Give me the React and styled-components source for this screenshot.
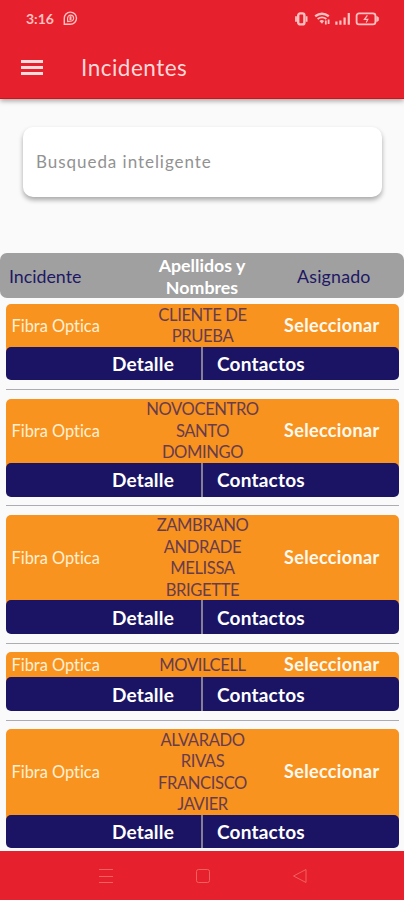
import styled, { createGlobalStyle } from "styled-components";

const INCIDENTS = [
  { id: 1, type: "Fibra Optica", client: "CLIENTE DE PRUEBA" },
  { id: 2, type: "Fibra Optica", client: "NOVOCENTRO SANTO DOMINGO" },
  { id: 3, type: "Fibra Optica", client: "ZAMBRANO ANDRADE MELISSA BRIGETTE" },
  { id: 4, type: "Fibra Optica", client: "MOVILCELL" },
  { id: 5, type: "Fibra Optica", client: "ALVARADO RIVAS FRANCISCO JAVIER" },
];

function ChatIcon() {
  return (
    <svg width="15" height="15" viewBox="0 0 15 15" fill="none" stroke="currentColor">
      <path d="M1.3 13.3V7.4A6.1 6.1 0 1 1 7.4 13.3Z" strokeWidth="1.4" />
      <path d="M4.6 10.6V7.2a3 3 0 1 1 3 3Z" strokeWidth="1.2" />
      <path d="M7.5 5.2v3.8" strokeWidth="2" />
    </svg>
  );
}

function StatusIcons() {
  return (
    <svg width="88" height="14" viewBox="0 0 88 14" fill="none" stroke="currentColor">
      <rect x="4.2" y="1.4" width="6.2" height="11" rx="2" strokeWidth="2.4" />
      <path d="M2 4.2v5.6M12.6 4.2v5.6" strokeWidth="1.8" />
      <path d="M21.2 4.2Q28 -0.6 34.8 4.2" strokeWidth="2.4" />
      <path d="M23.6 7Q28 3.8 32.4 7" strokeWidth="1.9" />
      <path d="M25.4 9Q28 7 30 9L28 11.8Z" fill="currentColor" stroke="none" />
      <path d="M31.8 12.6V8.4M34.6 7.4V12" strokeWidth="1.8" />
      <path d="M42.4 12.8V9.4M46.4 12.8V8.4M50.6 12.8V5.4M54.8 12.8V1" strokeWidth="2.2" />
      <rect x="62.6" y="1.4" width="18.8" height="11" rx="2.4" strokeWidth="1.8" />
      <path d="M82.6 4.2l2 1.4v2.8l-2 1.4z" fill="currentColor" strokeWidth="0.6" />
      <path d="M73.4 3.4l-3 4h3.4l-1.6 3.2" strokeWidth="1.2" />
    </svg>
  );
}

function IncidentCard({ type, client }) {
  return (
    <Card>
      <Summary>
        <IncidentType>{type}</IncidentType>
        <ClientName>{client}</ClientName>
        <SelectButton>Seleccionar</SelectButton>
      </Summary>
      <Actions>
        <ActionButton $align="right">Detalle</ActionButton>
        <ActionButton $align="left">Contactos</ActionButton>
      </Actions>
    </Card>
  );
}

export default function App() {
  return (
    <Screen>
      <GlobalStyle />
      <TopBar>
        <StatusBar>
          <Clock>3:16</Clock>
          <ChatIcon />
          <StatusRight>
            <StatusIcons />
          </StatusRight>
        </StatusBar>
        <Toolbar>
          <MenuButton aria-label="Menu">
            <span />
            <span />
            <span />
          </MenuButton>
          <Title>Incidentes</Title>
        </Toolbar>
      </TopBar>

      <Content>
        <SearchBox type="text" placeholder="Busqueda inteligente" />

        <TableHeader>
          <HeaderCell>Incidente</HeaderCell>
          <HeaderCell $strong>Apellidos y Nombres</HeaderCell>
          <HeaderCell $last>Asignado</HeaderCell>
        </TableHeader>

        <List>
          {INCIDENTS.map((incident) => (
            <IncidentCard key={incident.id} type={incident.type} client={incident.client} />
          ))}
        </List>
      </Content>

      <NavBar>
        <svg width="16" height="16" viewBox="0 0 16 16" fill="none" stroke="currentColor">
          <path d="M1 1.5h14M1 8.5h14M1 14.5h14" />
        </svg>
        <svg width="16" height="16" viewBox="0 0 16 16" fill="none" stroke="currentColor">
          <rect x="1.5" y="1.5" width="13" height="13" rx="2" />
        </svg>
        <svg width="16" height="16" viewBox="0 0 16 16" fill="none" stroke="currentColor">
          <path d="M14 1.5v13L1.5 8z" strokeLinejoin="round" />
        </svg>
      </NavBar>
    </Screen>
  );
}

const GlobalStyle = createGlobalStyle`
  * {
    box-sizing: border-box;
  }

  body {
    margin: 0;
    background: #fafafa;
    font-family: Lato, "Open Sans", sans-serif;
    font-variant-ligatures: none;
  }

  button {
    padding: 0;
    border: 0;
    background: none;
    color: inherit;
    font-family: inherit;
  }
`;

const Screen = styled.div`
  width: 404px;
  height: 900px;
  display: flex;
  flex-direction: column;
  overflow: hidden;
  background: #fafafa;
`;

const TopBar = styled.header`
  flex: none;
  height: 99px;
  border-bottom: 1px solid #d3121a;
  background: #e6202c;
  color: #ffd9d9;
  box-shadow: 0 2px 5px rgba(0, 0, 0, 0.35);
`;

const StatusBar = styled.div`
  height: 37px;
  display: flex;
  align-items: center;
  padding: 0 22px 0 26px;
  color: #ffc0c0;
`;

const Clock = styled.span`
  width: 37px;
  font-size: 14px;
  font-weight: 700;
`;

const StatusRight = styled.div`
  display: flex;
  margin-left: auto;
`;

const Toolbar = styled.div`
  height: 61px;
  display: flex;
  align-items: center;
  padding-left: 21px;
`;

const MenuButton = styled.button`
  width: 22px;
  display: flex;
  flex-direction: column;
  gap: 3px;

  span {
    height: 3px;
    background: #ffdcdc;
  }
`;

const Title = styled.h1`
  margin: 0 0 0 38px;
  font-size: 22.5px;
  font-weight: 400;
  letter-spacing: 0.5px;
`;

const Content = styled.main`
  flex: 1;
  min-height: 0;
  display: flex;
  flex-direction: column;
`;

const SearchBox = styled.input`
  flex: none;
  height: 70px;
  margin: 28px 22px 0 23px;
  padding: 0 13px 2px;
  border: 0;
  border-radius: 10px;
  background: #fff;
  box-shadow: 0 3px 5px rgba(0, 0, 0, 0.33);
  font-family: inherit;
  font-size: 17px;
  letter-spacing: 0.96px;

  &::placeholder {
    color: #929292;
    opacity: 1;
  }
`;

const TableHeader = styled.div`
  flex: none;
  height: 45px;
  display: grid;
  grid-template-columns: 139px 126px 139px;
  align-items: center;
  margin-top: 56px;
  border-radius: 7px;
  background: #a0a0a0;
`;

const HeaderCell = styled.div`
  padding-left: ${({ $last, $strong }) => ($last ? "32px" : $strong ? "0" : "9px")};
  color: ${({ $strong }) => ($strong ? "#fff" : "#201864")};
  font-size: 17.8px;
  font-weight: ${({ $strong }) => ($strong ? 700 : 400)};
  letter-spacing: ${({ $last }) => ($last ? "0.2px" : "0")};
  line-height: 22px;
  text-align: ${({ $strong }) => ($strong ? "center" : "left")};
`;

const List = styled.div`
  display: flex;
  flex-direction: column;
  padding: 6px 5px 0 6px;
`;

const Card = styled.article`
  & + & {
    margin-top: 8.7px;
    padding-top: 8.6px;
    border-top: 1px solid #acacb2;
  }
`;

const Summary = styled.div`
  min-height: 25px;
  display: grid;
  grid-template-columns: 133px 127px 133px;
  align-items: center;
  border-radius: 5px 5px 0 0;
  background: #f9931f;
`;

const IncidentType = styled.span`
  padding-left: 5.5px;
  color: #fff0d2;
  font-size: 16.4px;
`;

const ClientName = styled.span`
  margin: 0.6px 0 -0.6px;
  color: #683c4d;
  font-size: 16.6px;
  letter-spacing: -0.4px;
  line-height: 21.4px;
  text-align: center;
`;

const SelectButton = styled.button`
  padding-left: 18px;
  color: #fffaf0;
  font-size: 18px;
  font-weight: 700;
  letter-spacing: 0.35px;
  line-height: 21px;
  text-align: left;
`;

const Actions = styled.div`
  height: 33.6px;
  display: grid;
  grid-template-columns: 195px 1fr;
  border-radius: 5px;
  background: #1b1464;
  box-shadow: 0 -5px 0 -0.1px #f9931f;
  overflow: hidden;
`;

const ActionButton = styled.button`
  padding: ${({ $align }) => ($align === "right" ? "0 27px 0 0" : "0 0 0 14px")};
  border-left: ${({ $align }) => ($align === "left" ? "2px solid #858095" : "0")};
  color: #fff;
  font-size: 19px;
  font-weight: 700;
  letter-spacing: 0.2px;
  text-align: ${({ $align }) => $align};
`;

const NavBar = styled.nav`
  flex: none;
  height: 49px;
  display: flex;
  justify-content: center;
  align-items: center;
  gap: 81px;
  padding-left: 1px;
  background: #e6202c;
  color: #f3605f;
`;
